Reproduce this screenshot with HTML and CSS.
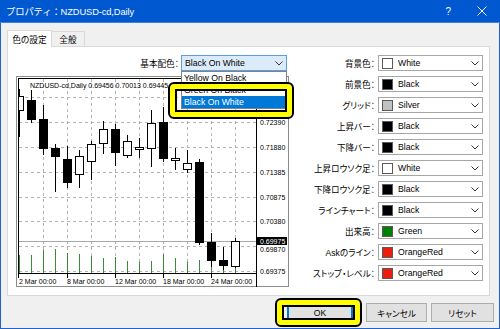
FILE: index.html
```html
<!DOCTYPE html>
<html lang="ja">
<head>
<meta charset="utf-8">
<title>プロパティ</title>
<link rel="stylesheet" href="styles.css">
</head>
<body>
<div class="win">
  <div class="titlebar">
    <span class="title">プロパティ：NZDUSD-cd,Daily</span>
    <span class="help">?</span>
    <svg class="close" width="10" height="10" viewBox="0 0 10 10"><path d="M0.5 0.5 L9.5 9.5 M9.5 0.5 L0.5 9.5" stroke="#fff" stroke-width="1" fill="none"/></svg>
  </div>
  <div class="tabs">
    <div class="tab sel">色の設定</div>
    <div class="tab">全般</div>
  </div>
  <div class="panel">
    <div class="leftcol">
      <div class="scheme">
        <span class="lbl">基本配色：</span>
        <div class="combo focus wide">
          <span class="ctext">Black On White</span>
          <svg class="chev" width="8" height="5" viewBox="0 0 8 5"><polyline points="0.5,0.5 4,4 7.5,0.5" fill="none" stroke="#333" stroke-width="1"/></svg>
          <div class="dlist">
            <div class="item">Yellow On Black</div>
            <div class="item">Green On Black</div>
            <div class="item on">Black On White</div>
          </div>
        </div>
      </div>
      <svg class="chart" width="273" height="211" viewBox="16 76 273 211">
        <rect x="16" y="76" width="273" height="211" fill="#fff"/>
        <g stroke="#b4b4b4" stroke-width="1" stroke-dasharray="3 3" fill="none">
          <path d="M19 97.5H256 M19 122.5H256 M19 147.5H256 M19 172.5H256 M19 197.5H256 M19 221.5H256 M19 246.5H256 M19 271.5H256"/>
          <path d="M43.5 79V273 M67.5 79V273 M91.5 79V273 M115.5 79V273 M139.5 79V273 M163.5 79V273 M187.5 79V273 M211.5 79V273 M235.5 79V273"/>
        </g>
        <g stroke="#3a8a3a" stroke-width="1">
          <path d="M19.5 255V273 M31.5 255V273 M43.5 250V273 M55.5 249V273 M67.5 253V273 M79.5 254V273 M91.5 256V273 M103.5 258V273 M115.5 257V273 M127.5 261V273 M139.5 262V273 M151.5 261V273 M163.5 254V273 M175.5 258V273 M187.5 262V273 M199.5 260V273 M211.5 263V273 M223.5 263V273 M235.5 265V273"/>
        </g>
        <path d="M19 241.5H256" stroke="#a8a8a8" stroke-width="1"/>
        <g stroke="#000" stroke-width="1">
          <path d="M19.5 89V137 M31.5 90V123 M43.5 105V155 M55.5 144V192 M67.5 146V188 M79.5 150V188 M91.5 141V180 M103.5 121V154 M115.5 124V166 M127.5 135V158 M139.5 138V158 M151.5 110V167 M163.5 107V162 M175.5 148V170 M187.5 150V173 M199.5 159V245 M211.5 233V267 M223.5 247V270 M235.5 238V268"/>
          <rect x="15.5" y="96.5" width="8" height="14" fill="#fff"/>
          <rect x="27.5" y="100.5" width="8" height="19" fill="#000"/>
          <rect x="39.5" y="119.5" width="8" height="29" fill="#000"/>
          <rect x="51.5" y="148.5" width="8" height="8" fill="#000"/>
          <rect x="63.5" y="159.5" width="8" height="23" fill="#000"/>
          <rect x="75.5" y="156.5" width="8" height="18" fill="#fff"/>
          <rect x="87.5" y="144.5" width="8" height="17" fill="#fff"/>
          <rect x="99.5" y="129.5" width="8" height="14" fill="#fff"/>
          <rect x="111.5" y="129.5" width="8" height="23" fill="#000"/>
          <rect x="123.5" y="141.5" width="8" height="14" fill="#fff"/>
          <rect x="135.5" y="147.5" width="8" height="2" fill="#fff"/>
          <rect x="147.5" y="123.5" width="8" height="25" fill="#fff"/>
          <rect x="159.5" y="122.5" width="8" height="36" fill="#000"/>
          <rect x="171.5" y="158.5" width="8" height="2" fill="#fff"/>
          <rect x="183.5" y="163.5" width="8" height="6" fill="#fff"/>
          <rect x="195.5" y="162.5" width="8" height="80" fill="#000"/>
          <rect x="207.5" y="242.5" width="8" height="18" fill="#000"/>
          <rect x="219.5" y="260.5" width="8" height="5" fill="#000"/>
          <rect x="231.5" y="241.5" width="8" height="25" fill="#fff"/>
        </g>
        <rect x="16" y="76" width="2.5" height="211" fill="#fff"/>
        <rect x="16.5" y="76.5" width="272" height="210" fill="none" stroke="#8c8c8c"/>
        <path d="M18.5 78V274 M18 273.5H257 M256.5 78V287 M18 78.5H257" stroke="#000" stroke-width="1" fill="none"/>
        <path d="M18.5 274V278 M67.5 274V278 M115.5 274V278 M163.5 274V278 M211.5 274V278" stroke="#000"/>
        <g font-family="Liberation Sans, sans-serif" font-size="7" fill="#000">
          <text x="30" y="87.5">NZDUSD-cd,Daily  0.69456 0.70013 0.69445 0.69975</text>
          <text x="260" y="100">0.72885</text>
          <text x="260" y="125">0.72390</text>
          <text x="260" y="150">0.71880</text>
          <text x="260" y="175">0.71385</text>
          <text x="260" y="200">0.70875</text>
          <text x="260" y="224">0.70380</text>
          <text x="260" y="251.5">0.69870</text>
          <text x="260" y="274">0.69375</text>
          <text x="19" y="284">2 Mar 00:00</text>
          <text x="67" y="284">8 Mar 00:00</text>
          <text x="115" y="284">12 Mar 00:00</text>
          <text x="163" y="284">18 Mar 00:00</text>
          <text x="211" y="284">24 Mar 00:00</text>
        </g>
        <rect x="257" y="237" width="30" height="8" fill="#000"/>
        <text x="260" y="243.7" font-family="Liberation Sans, sans-serif" font-size="7" fill="#fff">0.69975</text>
      </svg>
    </div>
    <div class="rightcol">
      <div class="row"><span class="lbl">背景色：</span><div class="combo"><span class="sw" style="background:#ffffff"></span><span class="ctext">White</span><svg class="chev" width="8" height="5" viewBox="0 0 8 5"><polyline points="0.5,0.5 4,4 7.5,0.5" fill="none" stroke="#333" stroke-width="1"/></svg></div></div>
      <div class="row"><span class="lbl">前景色：</span><div class="combo"><span class="sw" style="background:#000000"></span><span class="ctext">Black</span><svg class="chev" width="8" height="5" viewBox="0 0 8 5"><polyline points="0.5,0.5 4,4 7.5,0.5" fill="none" stroke="#333" stroke-width="1"/></svg></div></div>
      <div class="row"><span class="lbl">グリッド：</span><div class="combo"><span class="sw" style="background:#c0c0c0"></span><span class="ctext">Silver</span><svg class="chev" width="8" height="5" viewBox="0 0 8 5"><polyline points="0.5,0.5 4,4 7.5,0.5" fill="none" stroke="#333" stroke-width="1"/></svg></div></div>
      <div class="row"><span class="lbl">上昇バー：</span><div class="combo"><span class="sw" style="background:#000000"></span><span class="ctext">Black</span><svg class="chev" width="8" height="5" viewBox="0 0 8 5"><polyline points="0.5,0.5 4,4 7.5,0.5" fill="none" stroke="#333" stroke-width="1"/></svg></div></div>
      <div class="row"><span class="lbl">下降バー：</span><div class="combo"><span class="sw" style="background:#000000"></span><span class="ctext">Black</span><svg class="chev" width="8" height="5" viewBox="0 0 8 5"><polyline points="0.5,0.5 4,4 7.5,0.5" fill="none" stroke="#333" stroke-width="1"/></svg></div></div>
      <div class="row"><span class="lbl">上昇ロウソク足：</span><div class="combo"><span class="sw" style="background:#ffffff"></span><span class="ctext">White</span><svg class="chev" width="8" height="5" viewBox="0 0 8 5"><polyline points="0.5,0.5 4,4 7.5,0.5" fill="none" stroke="#333" stroke-width="1"/></svg></div></div>
      <div class="row"><span class="lbl">下降ロウソク足：</span><div class="combo"><span class="sw" style="background:#000000"></span><span class="ctext">Black</span><svg class="chev" width="8" height="5" viewBox="0 0 8 5"><polyline points="0.5,0.5 4,4 7.5,0.5" fill="none" stroke="#333" stroke-width="1"/></svg></div></div>
      <div class="row"><span class="lbl">ラインチャート：</span><div class="combo"><span class="sw" style="background:#000000"></span><span class="ctext">Black</span><svg class="chev" width="8" height="5" viewBox="0 0 8 5"><polyline points="0.5,0.5 4,4 7.5,0.5" fill="none" stroke="#333" stroke-width="1"/></svg></div></div>
      <div class="row"><span class="lbl">出来高：</span><div class="combo"><span class="sw" style="background:#008000"></span><span class="ctext">Green</span><svg class="chev" width="8" height="5" viewBox="0 0 8 5"><polyline points="0.5,0.5 4,4 7.5,0.5" fill="none" stroke="#333" stroke-width="1"/></svg></div></div>
      <div class="row"><span class="lbl">Askのライン：</span><div class="combo"><span class="sw" style="background:#ee1c0a"></span><span class="ctext">OrangeRed</span><svg class="chev" width="8" height="5" viewBox="0 0 8 5"><polyline points="0.5,0.5 4,4 7.5,0.5" fill="none" stroke="#333" stroke-width="1"/></svg></div></div>
      <div class="row"><span class="lbl">ストップ・レベル：</span><div class="combo"><span class="sw" style="background:#ee1c0a"></span><span class="ctext">OrangeRed</span><svg class="chev" width="8" height="5" viewBox="0 0 8 5"><polyline points="0.5,0.5 4,4 7.5,0.5" fill="none" stroke="#333" stroke-width="1"/></svg></div></div>
    </div>
  </div>
  <div class="buttons">
    <div class="btn ok">OK</div>
    <div class="btn cancel">キャンセル</div>
    <div class="btn reset">リセット</div>
  </div>
  <div class="hl hl-list"></div>
  <div class="hl hl-ok"></div>
</div>
</body>
</html>
```

FILE: styles.css
```css
* { box-sizing: border-box; }
html, body { margin: 0; padding: 0; }
body {
  width: 500px;
  height: 329px;
  overflow: hidden;
  background: #f0f0f0;
  font-family: "Liberation Sans", "Noto Sans CJK JP", sans-serif;
  font-size: 8.7px;
  color: #000;
  font-feature-settings: "palt";
}
.win {
  position: relative;
  width: 500px;
  height: 329px;
  background: #f0f0f0;
  border: 1px solid #1f63d3;
  border-top: none;
  display: flex;
  flex-direction: column;
}
.titlebar {
  height: 23px;
  margin: 0 -1px;
  background: #0058d0;
  border-bottom: 1px solid #3f82dc;
  color: #fff;
  display: flex;
  align-items: center;
  padding-left: 6px;
}
.title { font-size: 9.3px; font-feature-settings: normal; letter-spacing: -0.1px; }
.help { margin-left: auto; font-size: 10px; margin-right: 26px; }
.close { margin-right: 13px; display: block; }
.tabs {
  display: flex;
  align-items: flex-end;
  height: 16px;
  margin-top: 7px;
  padding-left: 6px;
}
.tab {
  height: 15px;
  width: 33px;
  border: 1px solid #d9d9d9;
  border-left: none;
  border-bottom: none;
  background: #f0f0f0;
  display: flex;
  align-items: center;
  justify-content: center;
  font-size: 8.7px;
}
.tab.sel {
  width: 45px;
  height: 17px;
  margin-bottom: -1px;
  background: #fff;
  border-left: 1px solid #d9d9d9;
  position: relative;
  z-index: 1;
}
.panel {
  margin-left: 6px;
  width: 483px;
  height: 250px;
  background: #fff;
  border: 1px solid #d9d9d9;
  display: flex;
  padding-top: 8px;
}
.leftcol {
  margin-left: 8px;
  width: 273px;
  display: flex;
  flex-direction: column;
}
.scheme {
  height: 16px;
  display: flex;
  justify-content: flex-end;
  align-items: center;
  padding-right: 2px;
}
.lbl { font-size: 8.6px; white-space: nowrap; }
.scheme .lbl { margin-right: 2px; }
.chart { display: block; margin-top: 5px; }
.rightcol {
  flex: 1;
  padding-right: 6px;
  display: flex;
  flex-direction: column;
  gap: 5px;
}
.row {
  height: 16px;
  display: flex;
  justify-content: flex-end;
  align-items: center;
}
.combo {
  position: relative;
  width: 105px;
  height: 16px;
  margin-left: 3px;
  border: 1px solid #a6a6a6;
  background: #fff;
  display: flex;
  align-items: center;
  padding-left: 3px;
}
.combo.wide { width: 106px; margin-left: 0; }
.combo.focus { background: #dcebfa; border-color: #5b9fe3; }
.sw {
  width: 11px;
  height: 11px;
  border: 1px solid #5a5a5a;
  margin-right: 5px;
  flex: none;
}
.ctext { flex: 1; white-space: nowrap; }
.chev { display: block; margin-right: 3px; flex: none; }
.dlist {
  position: absolute;
  left: -1px;
  right: -1px;
  top: 15px;
  background: #fff;
  border: 1px solid #828282;
  z-index: 2;
}
.item {
  height: 12px;
  line-height: 12px;
  padding-left: 2px;
  white-space: nowrap;
}
.item.on { background: #0078d7; color: #fff; margin-right: 1px; }
.buttons {
  display: flex;
  justify-content: flex-end;
  margin-top: 7px;
  padding-right: 5px;
}
.btn {
  height: 19px;
  border: 1px solid #adadad;
  background: #e1e1e1;
  display: flex;
  align-items: center;
  justify-content: center;
  font-size: 8.6px;
}
.btn.ok { width: 66px; border-color: #0078d7; box-shadow: inset 0 0 0 1px #0078d7; }
.btn.cancel { width: 61px; margin-left: 13px; }
.btn.reset { width: 63px; margin-left: 4px; }
.hl {
  position: absolute;
  border: 5px solid #ffff00;
  outline: 2px solid #000;
  box-shadow: inset 0 0 0 2px #000;
  border-radius: 4px;
  z-index: 5;
}
.hl-list { left: 169px; top: 84px; width: 122px; height: 33px; }
.hl-ok { left: 276px; top: 300px; width: 83px; height: 25px; }
```
